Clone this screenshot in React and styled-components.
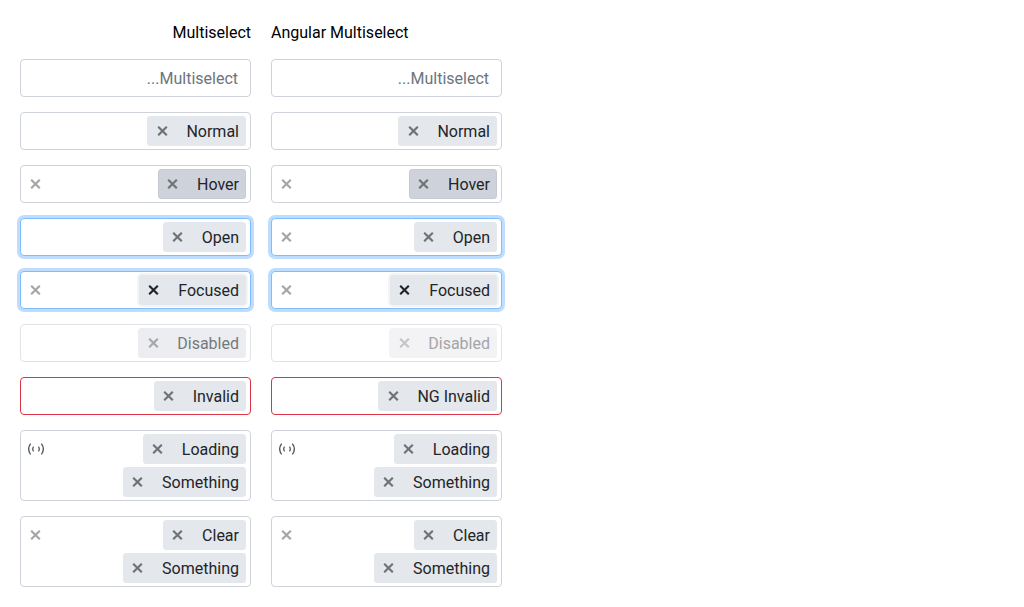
import React from "react";
import styled, { createGlobalStyle, css } from "styled-components";

const GlobalStyle = createGlobalStyle`
  *, *::before, *::after { box-sizing: border-box; }
  body {
    margin: 0;
    background: #fff;
    color: #000;
    font: 400 16px/24px Roboto, "Liberation Sans", sans-serif;
  }
`;

const Page = styled.main`
  display: flex;
  align-items: flex-start;
  gap: 20px;
  padding: 21px 20px 20px;
`;

const Column = styled.section`
  display: flex;
  flex-direction: column;
  gap: 15px;
  width: 231px;
`;

const Title = styled.h2`
  margin: 0 0 -1px;
  font-size: 16px;
  font-weight: 400;
  line-height: 24px;
  text-align: ${(p) => p.$align};
`;

const states = {
  open: css`
    border-color: #80bdff;
    box-shadow: 0 0 0 3px #bfdeff;
  `,
  invalid: css`
    border-color: #dc3545;
  `,
  disabled: css`
    border-color: #e1e3e8;
  `,
};

const Control = styled.div`
  display: flex;
  align-items: flex-start;
  justify-content: space-between;
  min-height: 38px;
  padding: 3px 4px;
  border: 1px solid #ced2db;
  border-radius: 4px;
  background: #fff;
  ${(p) => states[p.$state]}
`;

const Indicator = styled.span`
  display: flex;
  align-items: center;
  justify-content: center;
  width: ${(p) => (p.$loading ? 22 : 21)}px;
  height: 30px;
  color: ${(p) => (p.$loading ? "#495057" : "#a3a5a7")};
`;

const Chips = styled.div`
  display: flex;
  flex-direction: column;
  align-items: flex-end;
  gap: 3px;
  margin-left: auto;
`;

const chipStates = {
  hover: css`
    background: #ced2db;
    border-color: #c5cad4;
  `,
  focused: css`
    box-shadow: 0 0 0 2px #f3f4f5;
    --cross: #212529;
  `,
  disabled: css`
    background: #ecedf1;
    border-color: #ecedf1;
    color: #76797c;
    --cross: #a5a7aa;
  `,
  faded: css`
    background: #f3f3f5;
    border-color: #f3f3f5;
    color: #a3a5a7;
    --cross: #c4c5c7;
  `,
};

const ChipBox = styled.div`
  --cross: #6f7277;
  display: flex;
  align-items: center;
  height: 30px;
  padding: 0 6px 0 0;
  border: 1px solid #e4e7eb;
  border-radius: 3px;
  background: #e4e7eb;
  color: #212529;
  white-space: nowrap;
  ${(p) => chipStates[p.$state]}
`;

const ChipLabel = styled.span`
  padding-top: 2px;
`;

const ChipRemove = styled.span`
  display: flex;
  align-items: center;
  justify-content: center;
  width: 27.5px;
  height: 28px;
  margin-right: 10.5px;
  color: var(--cross);
`;

const Placeholder = styled.span`
  margin: 4px 8px 0 auto;
  color: #6c757d;
`;

const CrossSvg = styled.svg`
  display: block;
  width: 11px;
  height: 10px;
`;

const Cross = () => (
  <CrossSvg viewBox="0 0 11 10" fill="none" stroke="currentColor" strokeWidth="2.1">
    <path d="M1.2.7 9.8 9.3M9.8.7 1.2 9.3" />
  </CrossSvg>
);

const Spinner = () => (
  <svg width="18" height="14" viewBox="0 0 18 14" fill="none" stroke="currentColor" strokeWidth="1.3">
    <path d="M3.6 1.6Q-.3 7 3.6 12.4M14.4 1.6Q18.3 7 14.4 12.4" />
    <path d="M6.6 4.6Q4.6 7 6.6 9.4M11.4 4.6Q13.4 7 11.4 9.4" opacity="0.85" />
  </svg>
);

const Multiselect = ({ state, chipState, items = [], clear, loading }) => (
  <Control $state={state}>
    {(clear || loading) && (
      <Indicator $loading={loading}>{loading ? <Spinner /> : <Cross />}</Indicator>
    )}
    {items.length === 0 ? (
      <Placeholder>...Multiselect</Placeholder>
    ) : (
      <Chips>
        {items.map((item) => (
          <ChipBox key={item} $state={chipState}>
            <ChipRemove><Cross /></ChipRemove>
            <ChipLabel>{item}</ChipLabel>
          </ChipBox>
        ))}
      </Chips>
    )}
  </Control>
);

const rows = (angular) => [
  {},
  { items: ["Normal"] },
  { items: ["Hover"], chipState: "hover", clear: true },
  { items: ["Open"], state: "open", clear: angular },
  { items: ["Focused"], state: "open", chipState: "focused", clear: true },
  { items: ["Disabled"], state: "disabled", chipState: angular ? "faded" : "disabled" },
  { items: [angular ? "NG Invalid" : "Invalid"], state: "invalid" },
  { items: ["Loading", "Something"], loading: true },
  { items: ["Clear", "Something"], clear: true },
];

export default function App() {
  return (
    <>
      <GlobalStyle />
      <Page>
        <Column>
          <Title $align="right">Multiselect</Title>
          {rows(false).map((row, i) => <Multiselect key={i} {...row} />)}
        </Column>
        <Column>
          <Title $align="left">Angular Multiselect</Title>
          {rows(true).map((row, i) => <Multiselect key={i} {...row} />)}
        </Column>
      </Page>
    </>
  );
}
